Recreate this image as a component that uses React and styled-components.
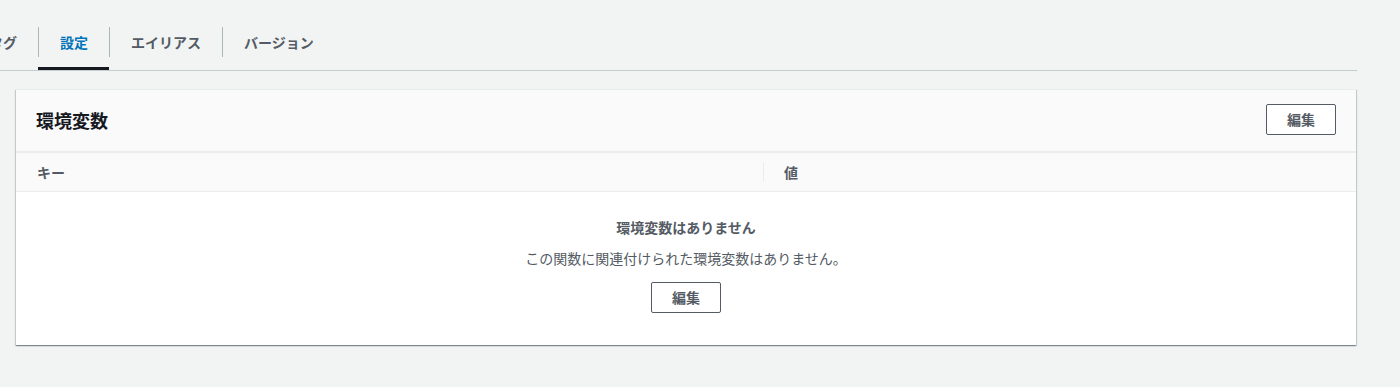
import React from "react";
import styled, { createGlobalStyle } from "styled-components";

const GlobalStyle = createGlobalStyle`
  html, body {
    margin: 0;
    padding: 0;
    background: #f2f3f3;
    overflow: hidden;
  }
  body {
    font-family: "Noto Sans CJK JP", "Noto Sans", sans-serif;
    color: #16191f;
  }
`;

const Page = styled.div`
  width: 1400px;
  height: 387px;
  background: #f2f3f3;
  overflow: hidden;
`;

const Main = styled.div`
  width: 1357px;
  padding-top: 17px;
`;

const TabBar = styled.div`
  display: flex;
  border-bottom: 1px solid #c4cdcd;
  overflow: hidden;
`;

const TabTrack = styled.div`
  display: flex;
  margin-left: -34px;
`;

const Tab = styled.div`
  padding: 10px 0;
  border-bottom: 3px solid ${(p) => (p.$active ? "#16191f" : "transparent")};
`;

const TabLabel = styled.div`
  height: 30px;
  line-height: 30px;
  padding: 0 21px 0 ${(p) => (p.$first ? "22px" : "21px")};
  border-left: 1px solid ${(p) => (p.$first ? "transparent" : "#aab7b8")};
  font-size: 14px;
  font-weight: 700;
  white-space: nowrap;
  color: ${(p) => (p.$active ? "#0073bb" : "#545b64")};
`;

const Card = styled.section`
  margin: 18px 1px 0 16px;
  background: #fff;
  border-top: 1px solid #eaeded;
  box-shadow: 0 1px 1px 0 rgba(0, 28, 36, 0.3),
    1px 1px 1px 0 rgba(0, 28, 36, 0.15),
    -1px 1px 1px 0 rgba(0, 28, 36, 0.15);
`;

const CardHeader = styled.div`
  display: flex;
  align-items: center;
  justify-content: space-between;
  padding: 14px 20px 16px;
  background: #fafafa;
  border-bottom: 1px solid #eaeded;
`;

const Title = styled.h2`
  margin: 0;
  font-size: 18px;
  line-height: 26px;
  font-weight: 700;
  color: #16191f;
`;

const Button = styled.button`
  height: 31px;
  padding: 0 20px;
  border: 1px solid #545b64;
  border-radius: 2px;
  background: #fff;
  color: #545b64;
  font-family: inherit;
  font-size: 14px;
  font-weight: 700;
  line-height: 29px;
  cursor: pointer;
  margin-top: ${(p) => p.$mt || "0"};
`;

const HeadRow = styled.div`
  display: grid;
  grid-template-columns: 747px 1fr;
  height: 38px;
  align-items: center;
  background: #fafafa;
  border-top: 1px solid #eaeded;
  border-bottom: 1px solid #eaeded;
`;

const HeadCell = styled.div`
  padding: 0 20px;
  font-size: 14px;
  font-weight: 700;
  line-height: 20px;
  color: #545b64;
  border-left: 1px solid ${(p) => (p.$divider ? "#eaeded" : "transparent")};
`;

const Empty = styled.div`
  display: flex;
  flex-direction: column;
  align-items: center;
  padding: 25px 20px 32px;
  background: #fff;
`;

const EmptyTitle = styled.div`
  font-size: 14px;
  font-weight: 700;
  line-height: 20px;
  color: #545b64;
`;

const EmptyText = styled.p`
  margin: 11px 0 0;
  font-size: 14px;
  line-height: 20px;
  color: #545b64;
`;

const tabs = [
  { label: "タグ" },
  { label: "設定", active: true },
  { label: "エイリアス" },
  { label: "バージョン" },
];

export default function App() {
  return (
    <Page>
      <GlobalStyle />
      <Main>
        <TabBar>
          <TabTrack>
            {tabs.map((t, i) => (
              <Tab key={t.label} $active={t.active}>
                <TabLabel $first={i === 0} $active={t.active}>
                  {t.label}
                </TabLabel>
              </Tab>
            ))}
          </TabTrack>
        </TabBar>
        <Card>
          <CardHeader>
            <Title>環境変数</Title>
            <Button>編集</Button>
          </CardHeader>
          <HeadRow>
            <HeadCell>キー</HeadCell>
            <HeadCell $divider>値</HeadCell>
          </HeadRow>
          <Empty>
            <EmptyTitle>環境変数はありません</EmptyTitle>
            <EmptyText>この関数に関連付けられた環境変数はありません。</EmptyText>
            <Button $mt="14px">編集</Button>
          </Empty>
        </Card>
      </Main>
    </Page>
  );
}
